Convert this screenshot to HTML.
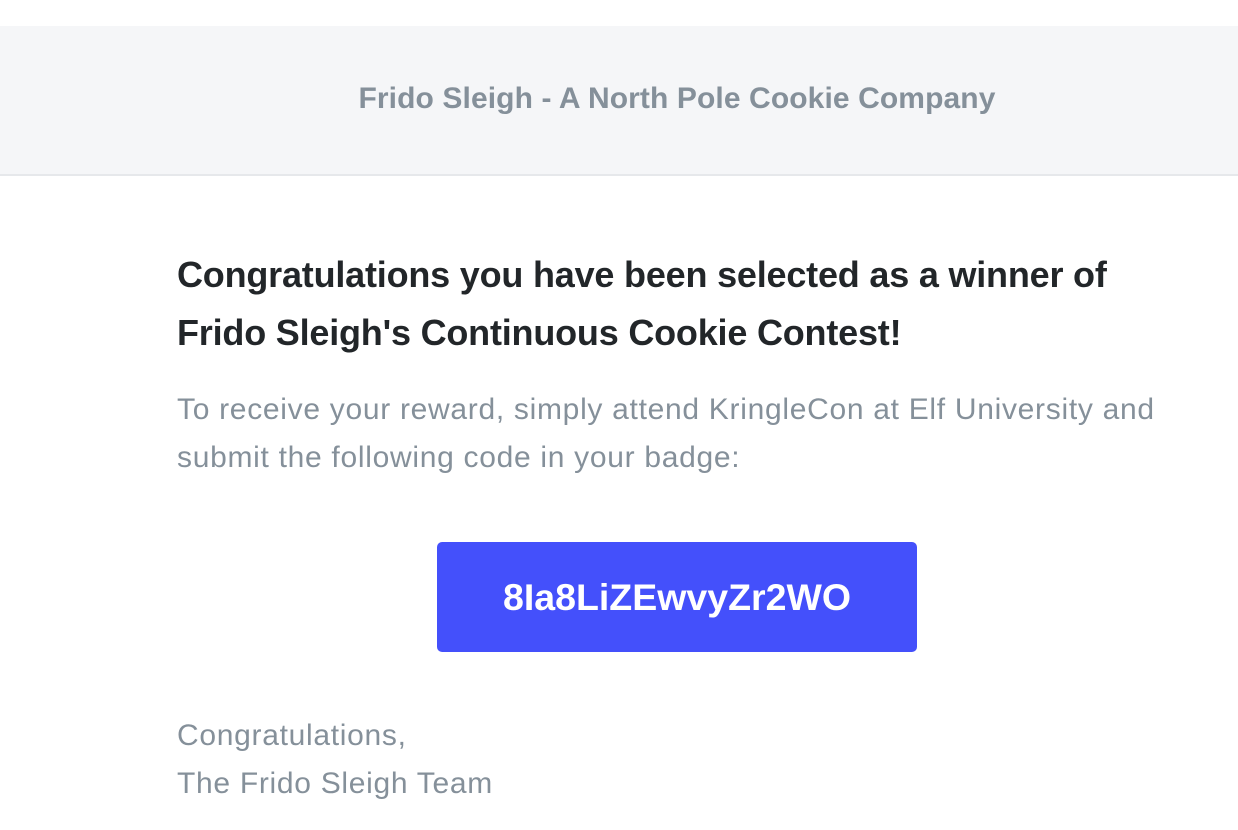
<!DOCTYPE html>
<html><head><meta charset="utf-8"><style>
html,body{margin:0;padding:0;background:#fff;width:1238px;height:830px;overflow:hidden;font-family:"Liberation Sans",Arial,sans-serif}
.hdr{position:absolute;top:26px;left:0;width:1238px;height:148px;background:#f5f6f8;border-bottom:2px solid #e6e8eb}
.hdr div{position:absolute;left:0;width:1238px;top:56px;text-align:center;padding-left:116px;box-sizing:border-box;font-weight:bold;font-size:30px;color:#85909a;letter-spacing:0.1px}
h1{position:absolute;left:177px;top:246px;margin:0;font-size:36px;line-height:58px;color:#222629;letter-spacing:-0.2px;font-weight:bold;width:1060px;white-space:nowrap}
.p{position:absolute;left:177px;margin:0;font-size:30px;line-height:48px;color:#85909a;letter-spacing:0.7px;width:1060px;white-space:nowrap}
.btn{position:absolute;left:437px;top:542px;width:480px;height:110px;background:#4450fb;border-radius:5px;color:#fff;font-weight:bold;font-size:37.5px;line-height:110px;text-align:center}
</style></head><body>
<div class="hdr"><div>Frido Sleigh - A North Pole Cookie Company</div></div>
<h1>Congratulations you have been selected as a winner of<br>Frido Sleigh's Continuous Cookie Contest!</h1>
<p class="p" style="top:386px">To receive your reward, simply attend KringleCon at Elf University and<br>submit the following code in your badge:</p>
<div class="btn">8Ia8LiZEwvyZr2WO</div>
<p class="p" style="top:712px">Congratulations,<br>The Frido Sleigh Team</p>
</body></html>
